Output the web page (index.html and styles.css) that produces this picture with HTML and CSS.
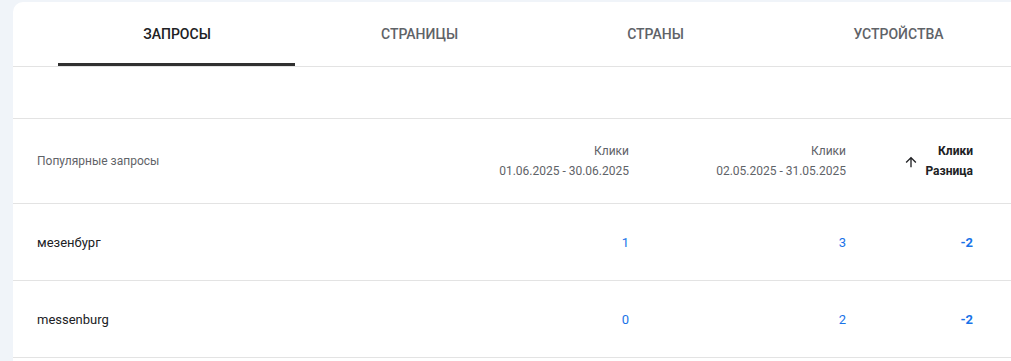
FILE: index.html
```html
<!DOCTYPE html>
<html lang="ru">
<head>
  <meta charset="UTF-8">
  <title>Запросы</title>
  <meta name="viewport" content="width=device-width, initial-scale=1.0">
  <link rel="stylesheet" href="styles.css">
</head>
<body>

<div class="card">
  <div class="tabs">
    <div class="tab active">Запросы</div>
    <div class="tab pages">Страницы</div>
    <div class="tab countries">Страны</div>
    <div class="tab devices">Устройства</div>
  </div>

  <div class="toolbar"></div>

  <div class="row head">
    <div class="cell name">Популярные запросы</div>
    <div class="cell num">Клики<br>01.06.2025 - 30.06.2025</div>
    <div class="cell num">Клики<br>02.05.2025 - 31.05.2025</div>
    <div class="cell num sorted">
      <svg class="arrow" width="16" height="16" viewBox="0 0 24 24"><path d="M4 12l1.41 1.41L11 7.83V20h2V7.83l5.58 5.59L20 12l-8-8-8 8z" fill="#202124"/></svg>
      <span>Клики<br>Разница</span>
    </div>
  </div>

  <div class="row">
    <div class="cell name">мезенбург</div>
    <div class="cell num val">1</div>
    <div class="cell num val">3</div>
    <div class="cell num diff">-2</div>
  </div>

  <div class="row">
    <div class="cell name">messenburg</div>
    <div class="cell num val">0</div>
    <div class="cell num val">2</div>
    <div class="cell num diff">-2</div>
  </div>
</div>

</body>
</html>
```

FILE: styles.css
```css
body { margin: 0; background: #f0f4f9; font-family: Roboto, Arial, sans-serif; overflow: hidden; }

.card { margin: 2px 0 0 13px; background: white; border-top-left-radius: 10px; height: 400px; }

.tabs { display: flex; padding-left: 45px; height: 64px; border-bottom: 1px solid #e3e3e3; }
.tab { width: 238px; flex-shrink: 0; display: flex; align-items: center; justify-content: center; font-size: 14px; font-weight: 500; text-transform: uppercase; color: #5f6368; position: relative; padding-bottom: 1px; box-sizing: border-box; }
.tab.pages { width: 247px; }
.tab.countries { width: 225px; }
.tab.devices { width: 261px; }
.tab.active { color: #202124; }
.tab.active::after { content: ""; position: absolute; left: 0; right: 1px; bottom: 0; height: 3px; background: #303030; }

.toolbar { height: 51px; border-bottom: 1px solid #e3e3e3; }

.row { display: grid; grid-template-columns: 1fr 217px 217px 127px; padding: 0 38px 0 24px; height: 76px; align-items: center; border-bottom: 1px solid #e3e3e3; font-size: 13px; color: #202124; }
.row.head { height: 84px; font-size: 12px; color: #5f6368; line-height: 20px; }

.cell.num { text-align: right; }
.sorted { display: flex; justify-content: flex-end; align-items: center; gap: 6px; color: #202124; font-weight: 700; }
.arrow { margin-top: 1px; }

.val { color: #1a73e8; }
.diff { color: #1a73e8; font-weight: 700; }
```
